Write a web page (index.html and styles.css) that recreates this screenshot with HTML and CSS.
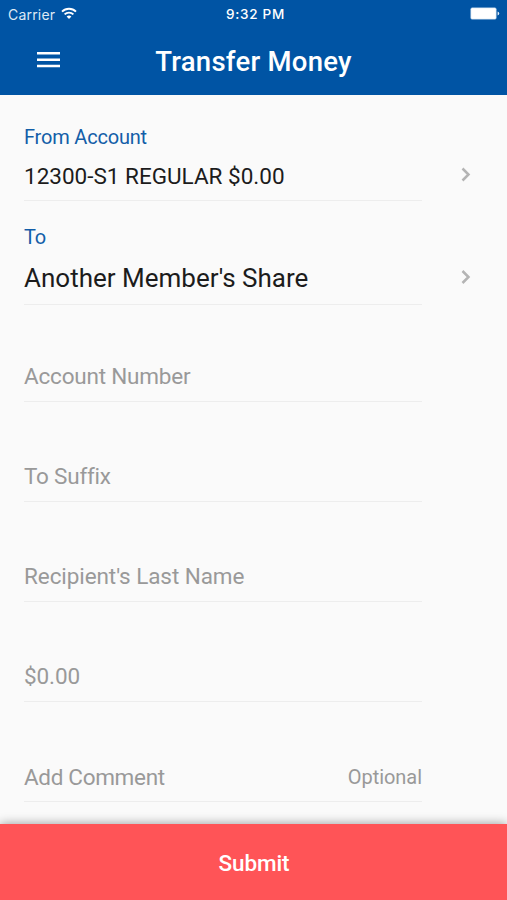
FILE: index.html
```html
<!DOCTYPE html>
<html lang="en">
<head>
<meta charset="utf-8">
<title>Transfer Money</title>
<link rel="stylesheet" href="styles.css">
</head>
<body>
<div class="app">
  <header class="header">
    <div class="status">
      <div class="carrier"><span class="carrier-name">Carrier</span>
        <svg class="wifi" width="16" height="13" viewBox="0 0 16 13" fill="none" stroke="#fff" stroke-width="1.9"><path d="M1 4.6a10 10 0 0 1 14 0M3.6 7.4a6.3 6.3 0 0 1 8.8 0"/><path d="M5.6 9.6a3.5 3.5 0 0 1 4.8 0L8 12z" fill="#fff" stroke="none"/></svg>
      </div>
      <div class="clock">9:32 PM</div>
      <svg class="battery" width="30" height="13" viewBox="0 0 30 13"><rect x="0.7" y="0.7" width="25.6" height="11.6" rx="1.5" fill="#fff" stroke="#8fb4d9" stroke-width=".5"/><path d="M27.6 4.5q1.6.4 1.6 2t-1.6 2z" fill="#e4eef8"/></svg>
    </div>
    <div class="bar">
      <svg class="menu" width="23" height="16" viewBox="0 0 23 16" fill="#fff"><path d="M0 0h23v2.5H0zM0 6.4h23v2.5H0zM0 12.8h23v2.5H0z"/></svg>
      <h1 class="title">Transfer Money</h1>
    </div>
  </header>
  <main class="form">
    <section class="field from">
      <div class="label">From Account</div>
      <div class="value">12300-S1 REGULAR $0.00</div>
      <svg class="chevron" width="10" height="16" viewBox="0 0 10 16"><path d="M1.5 2.5l6 6-6 6"/></svg>
    </section>
    <section class="field to">
      <div class="label">To</div>
      <div class="value large">Another Member's Share</div>
      <svg class="chevron" width="10" height="16" viewBox="0 0 10 16"><path d="M1.5 2l6 6-6 6"/></svg>
    </section>
    <div class="input first"><span class="account">Account Number</span></div>
    <div class="input"><span class="suffix">To Suffix</span></div>
    <div class="input"><span class="recipient">Recipient's Last Name</span></div>
    <div class="input"><span class="amount">$0.00</span></div>
    <div class="input last"><span class="comment">Add Comment</span><span class="optional">Optional</span></div>
  </main>
  <footer class="submit"><span>Submit</span></footer>
</div>
</body>
</html>
```
FILE: styles.css
```css
* { box-sizing: border-box; }
body { margin: 0; font-family: Roboto, sans-serif; background: #fafafa; }
.app { width: 507px; height: 900px; display: flex; flex-direction: column; overflow: hidden; }
.header { height: 95px; flex: none; background: #0054a4; color: #fff; }
.status { height: 28px; display: grid; grid-template-columns: 1fr auto 1fr; align-items: center; padding: 0 7px 0 8px; font-family: Inter, sans-serif; font-size: 13px; }
.carrier { display: flex; align-items: center; gap: 6px; }
.carrier-name { font-size: 14px; letter-spacing: .2px; color: #dde9f5; }
.wifi { margin-top: -2px; }
.clock { font-weight: 500; font-size: 13.5px; letter-spacing: .75px; margin-left: 3px; }
.battery { justify-self: end; margin-top: -1px; }
.bar { height: 67px; display: grid; grid-template-columns: 85px 1fr 85px; align-items: center; }
.menu { margin-left: 37px; margin-top: -4px; }
.title { margin: 0; text-align: center; font-size: 27.5px; font-weight: 500; letter-spacing: .25px; line-height: 32px; white-space: nowrap; }
.form { flex: 1; min-height: 0; padding: 0 24px; }
.field { width: 459px; display: grid; grid-template-columns: 398px 1fr; align-content: start; }
.from { padding-top: 30px; height: 106px; }
.to { padding-top: 24px; height: 104px; }
.label { grid-column: 1 / -1; color: #135ea8; font-size: 20px; letter-spacing: -.2px; line-height: 24px; }
.value { height: 52px; padding-top: 14px; border-bottom: 1px solid #ededed; color: #1c1c1c; font-size: 22.5px; line-height: 26px; white-space: nowrap; }
.large { height: 56px; padding-top: 13px; font-size: 26px; line-height: 32px; }
.chevron { margin: 17px 0 0 39px; fill: none; stroke: #b4b4b4; stroke-width: 2.5; }
.to .chevron { margin-top: 20px; }
.input { width: 398px; height: 100px; padding-top: 61px; border-bottom: 1px solid #ededed; display: flex; justify-content: space-between; color: #999; font-size: 22.5px; line-height: 26px; font-variant-ligatures: none; }
.first { height: 97px; padding-top: 58px; }
.last { padding-top: 62px; }
.account { letter-spacing: -.2px; }
.suffix { letter-spacing: -.22px; }
.recipient { letter-spacing: -.08px; }
.amount { letter-spacing: -.1px; }
.comment { letter-spacing: -.32px; }
.optional { font-size: 20px; letter-spacing: -.05px; }
.submit { height: 76px; flex: none; display: flex; justify-content: center; align-items: center; padding: 2px 0 0 1px; background: #ff5457; color: #fff; font-size: 22.5px; font-weight: 500; letter-spacing: -.1px; box-shadow: 0 0 10px rgba(0,0,0,.4); z-index: 1; }
```
